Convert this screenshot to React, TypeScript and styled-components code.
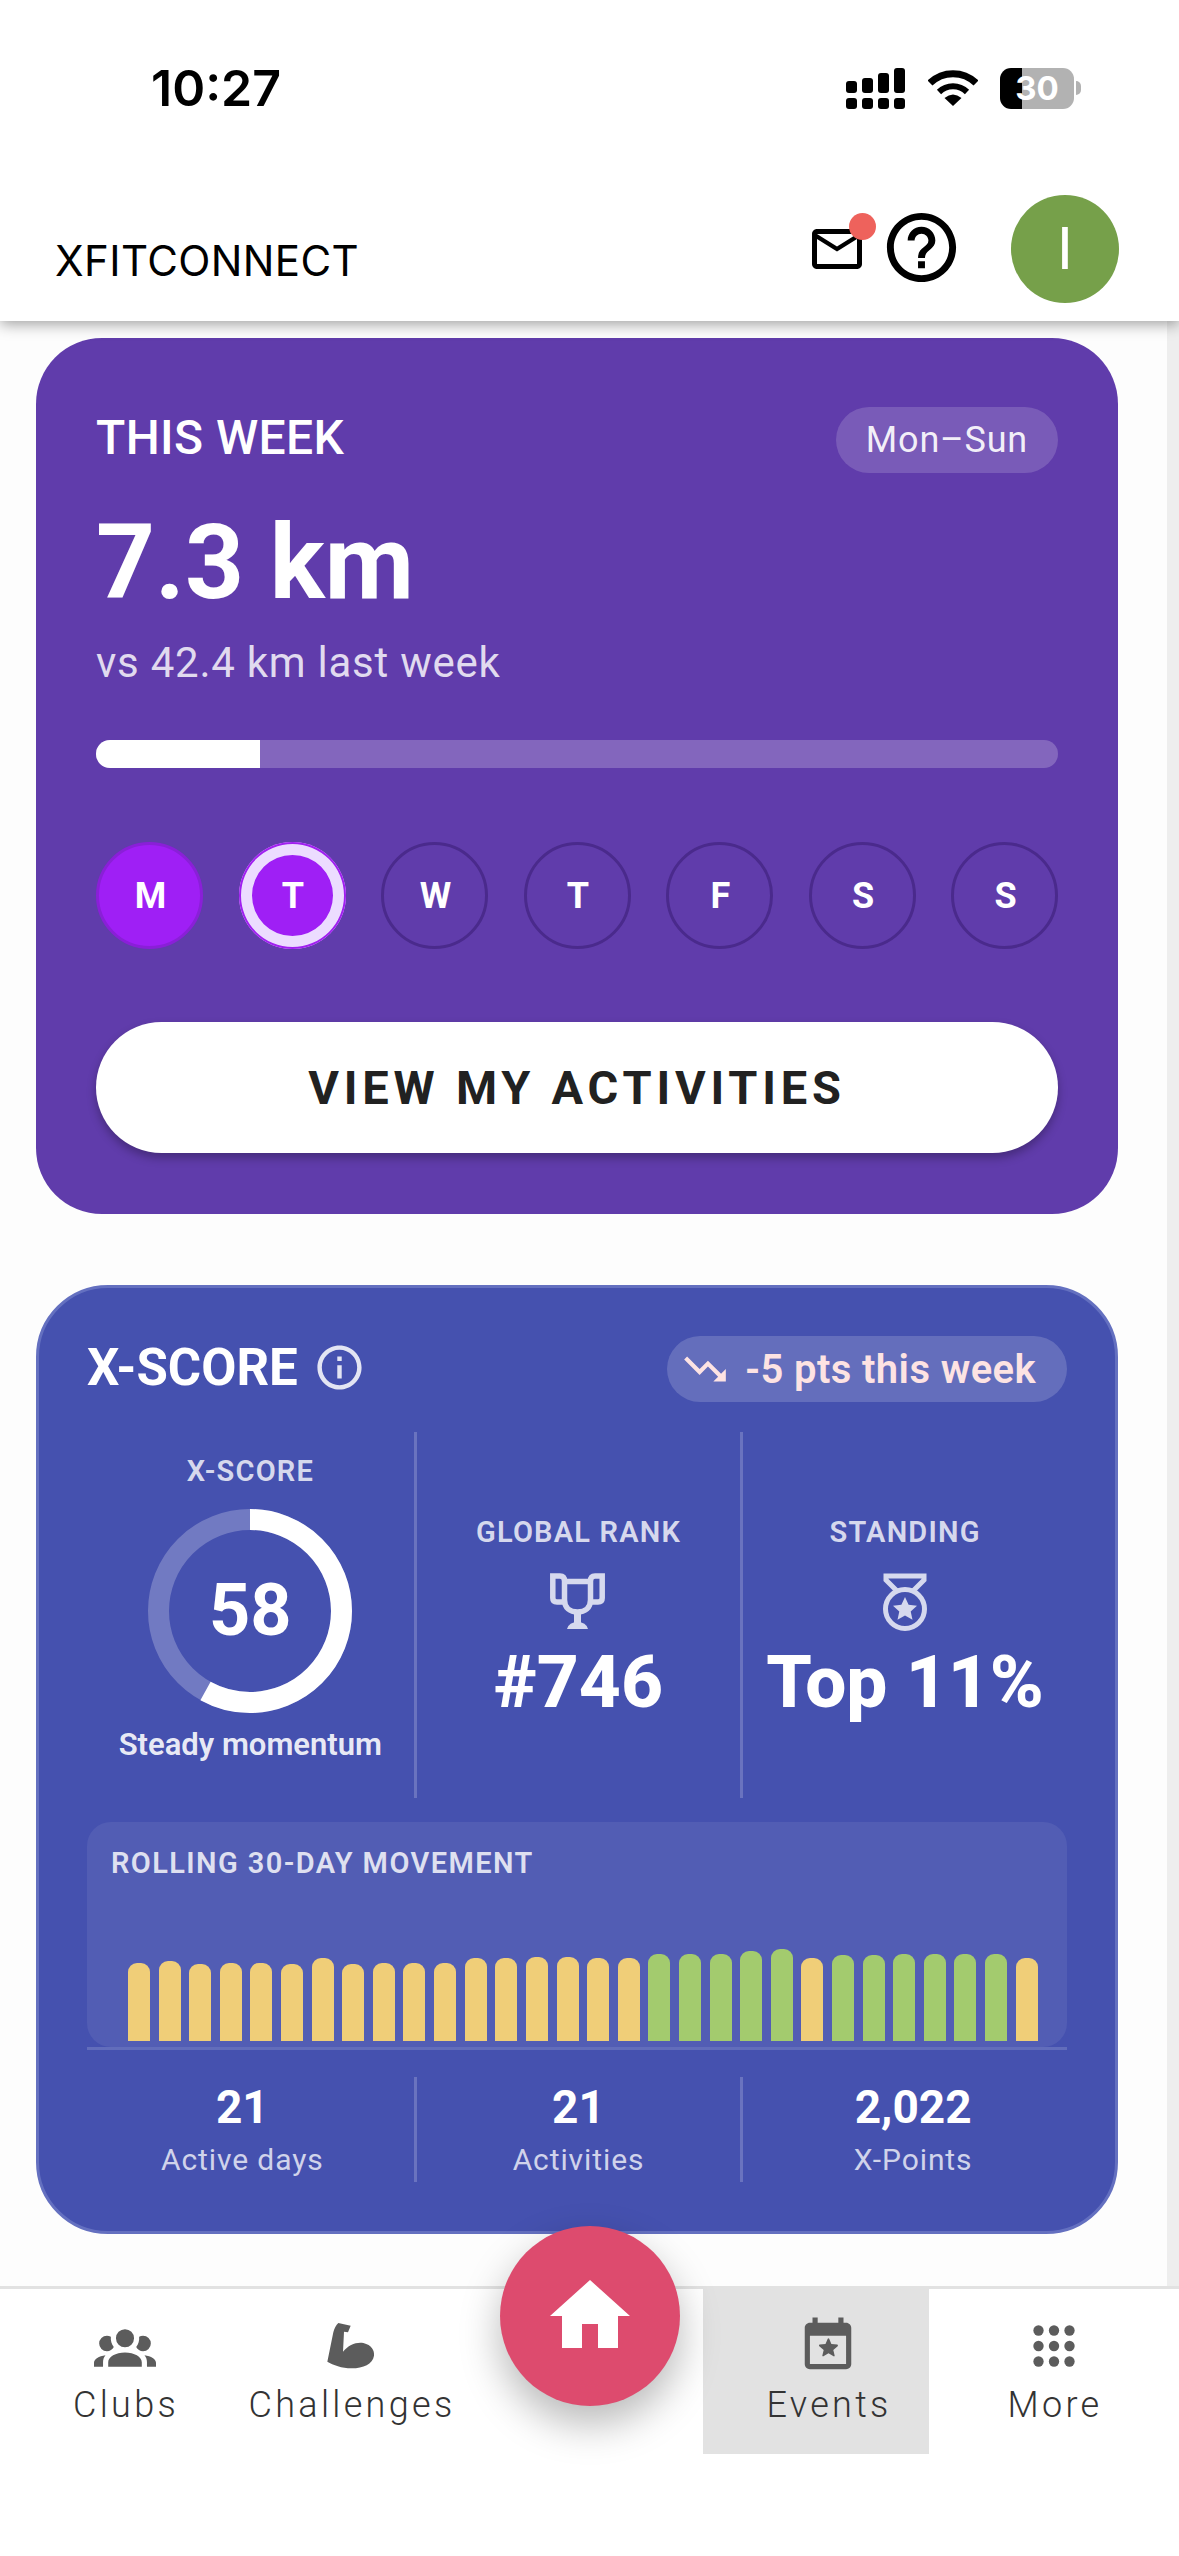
import React from 'react';
import styled, { createGlobalStyle } from 'styled-components';
import { MdHelpOutline, MdHome, MdInfoOutline, MdMailOutline, MdTrendingDown } from 'react-icons/md';

const GlobalStyle = createGlobalStyle`
    html, body {
        margin: 0;
        padding: 0;
        background: #ffffff;
    }
    * {
        box-sizing: border-box;
    }
`;

const Screen = styled.div`
    width: 1179px;
    height: 2556px;
    display: flex;
    flex-direction: column;
    overflow: hidden;
    background: #ffffff;
    font-family: Roboto, "Liberation Sans", sans-serif;
`;

const TopBar = styled.header`
    position: relative;
    z-index: 2;
    height: 321px;
    flex: none;
    background: #ffffff;
    box-shadow: 0 3px 14px rgba(0, 0, 0, 0.38);
`;

const StatusRow = styled.div`
    height: 176px;
    display: flex;
    align-items: center;
    justify-content: space-between;
    padding: 0 105px 0 151px;
`;

const Clock = styled.span`
    font-family: Inter, "Liberation Sans", sans-serif;
    font-size: 50px;
    font-weight: 600;
    color: #000000;
`;

const StatusIcons = styled.div`
    display: flex;
    align-items: center;
    gap: 22px;
`;

const Battery = styled.div`
    position: relative;
    width: 74px;
    height: 41px;
    border-radius: 11px;
    display: flex;
    align-items: center;
    justify-content: center;
    background: linear-gradient(90deg, #000000 0 30%, #b2b2b2 30% 100%);
    color: #ffffff;
    font-family: Inter, "Liberation Sans", sans-serif;
    font-size: 33px;
    font-weight: 700;

    &::after {
        content: '';
        position: absolute;
        right: -7px;
        top: 13px;
        width: 5px;
        height: 14px;
        border-radius: 0 5px 5px 0;
        background: #b2b2b2;
    }
`;

const HeaderRow = styled.div`
    height: 145px;
    display: flex;
    align-items: center;
    padding: 0 60px 0 55px;
`;

const Logo = styled.span`
    margin-top: 24px;
    font-family: Inter, "Liberation Sans", sans-serif;
    font-size: 42px;
    line-height: 42px;
    font-weight: 400;
    letter-spacing: 0.4px;
    color: #000000;
`;

const HeaderActions = styled.div`
    margin-left: auto;
    display: flex;
    align-items: center;
`;

const MailButton = styled.div`
    position: relative;
    width: 60px;
    height: 60px;
    color: #000000;
    margin-right: 13px;

    &::after {
        content: '';
        position: absolute;
        top: -6px;
        right: -9px;
        width: 27px;
        height: 27px;
        border-radius: 50%;
        background: #ee625c;
    }
`;

const HelpButton = styled.div`
    width: 83px;
    height: 83px;
    color: #000000;
    margin-top: -3px;
`;

const Avatar = styled.div`
    width: 108px;
    height: 108px;
    margin-left: 48px;
    border-radius: 50%;
    display: flex;
    align-items: center;
    justify-content: center;
    background: #76a04a;
    color: #ffffff;
    font-size: 60px;
`;

const Main = styled.main`
    flex: 1;
    min-height: 0;
    display: flex;
    flex-direction: column;
    gap: 71px;
    padding: 17px 49px 0 36px;
    background: #fdfdfd;
    border-right: 12px solid #eeeeee;
`;

const WeekCard = styled.section`
    height: 876px;
    flex: none;
    padding: 69px 60px 60px;
    border-radius: 66px;
    background: #603cab;
    color: #ffffff;
`;

const CardHead = styled.div`
    display: flex;
    align-items: flex-start;
    justify-content: space-between;
`;

const WeekTitle = styled.h2`
    margin: 1px 0 0;
    font-size: 48px;
    line-height: 60px;
    font-weight: 500;
    letter-spacing: 0.4px;
`;

const RangePill = styled.span`
    height: 66px;
    padding: 0 30px;
    display: flex;
    align-items: center;
    border-radius: 33px;
    background: rgba(255, 255, 255, 0.16);
    font-size: 36px;
    letter-spacing: 0.8px;
    color: rgba(255, 255, 255, 0.92);
`;

const Distance = styled.div`
    margin-top: 30px;
    font-size: 103px;
    line-height: 120px;
    font-weight: 700;
`;

const Compare = styled.div`
    margin-top: 10px;
    font-size: 42px;
    line-height: 60px;
    letter-spacing: 0.75px;
    color: rgba(255, 255, 255, 0.82);
`;

const Track = styled.div`
    margin-top: 47px;
    height: 28px;
    border-radius: 14px;
    overflow: hidden;
    background: rgba(255, 255, 255, 0.22);
`;

const TrackFill = styled.div`
    height: 100%;
    background: #ffffff;
`;

const Days = styled.div`
    margin-top: 74px;
    display: flex;
    justify-content: space-between;
`;

const Day = styled.div<{ $done?: boolean; $today?: boolean }>`
    width: 107px;
    height: 107px;
    padding-left: 2px;
    border-radius: 50%;
    display: flex;
    align-items: center;
    justify-content: center;
    font-size: 36px;
    font-weight: 700;
    color: #ffffff;
    background: ${(p) => (p.$done || p.$today ? '#9f1ff5' : 'transparent')};
    border: 3px solid ${(p) => (p.$done ? '#8a1fd8' : '#4a2a8c')};
    ${(p) => p.$today && `
        border: 0;
        box-shadow: inset 0 0 0 2px #a020f0, inset 0 0 0 13px #ecdcff;
    `}
`;

const ActivitiesButton = styled.button`
    display: block;
    width: 100%;
    height: 131px;
    margin-top: 73px;
    border: 0;
    border-radius: 66px;
    background: #ffffff;
    box-shadow: 0 5px 10px rgba(0, 0, 0, 0.28);
    font-family: inherit;
    font-size: 47px;
    font-weight: 700;
    letter-spacing: 4.8px;
    color: #212121;
`;

const ScoreCard = styled.section`
    height: 949px;
    flex: none;
    padding: 48px 48px 0;
    border: 3px solid #6470c0;
    border-radius: 72px;
    background: #4551af;
    color: #ffffff;
`;

const ScoreTitle = styled.h2`
    margin: 0;
    height: 66px;
    padding-bottom: 3px;
    display: flex;
    align-items: center;
    gap: 15px;
    font-size: 51px;
    font-weight: 700;

    svg {
        color: rgba(255, 255, 255, 0.85);
    }
`;

const TrendPill = styled.span`
    height: 66px;
    padding: 0 31px 0 13px;
    display: flex;
    align-items: center;
    gap: 15px;
    border-radius: 33px;
    background: rgba(255, 255, 255, 0.17);
    font-size: 40px;
    font-weight: 600;
    letter-spacing: 0.4px;
    color: #fde3e3;
`;

const MetricRow = styled.div`
    margin-top: 30px;
    height: 366px;
    display: grid;
    grid-template-columns: repeat(3, 1fr);
`;

const MetricCol = styled.div<{ $divided?: boolean; $score?: boolean }>`
    display: flex;
    flex-direction: column;
    align-items: center;
    justify-content: center;
    border-left: ${(p) => (p.$divided ? '3px solid rgba(255, 255, 255, 0.2)' : '0')};
    padding: ${(p) => (p.$score ? '1px 0 14px' : '6px 0 0')};
`;

const MetricLabel = styled.div`
    font-size: 29px;
    line-height: 40px;
    font-weight: 600;
    letter-spacing: 1.2px;
    color: rgba(255, 255, 255, 0.8);
`;

const Ring = styled.div`
    position: relative;
    width: 204px;
    height: 204px;
    margin-top: 18px;
`;

const RingValue = styled.div`
    position: absolute;
    inset: 0;
    display: flex;
    align-items: center;
    justify-content: center;
    font-size: 72px;
    font-weight: 700;
`;

const Momentum = styled.div`
    margin-top: 10px;
    font-size: 31px;
    line-height: 44px;
    font-weight: 600;
    white-space: nowrap;
    color: rgba(255, 255, 255, 0.9);
`;

const MetricIcon = styled.div`
    height: 57px;
    margin-top: 21px;
    color: #d6d9ee;
`;

const MetricValue = styled.div`
    margin-top: 10px;
    font-size: 73px;
    line-height: 84px;
    font-weight: 800;
    white-space: nowrap;
`;

const ChartPanel = styled.div`
    height: 225px;
    margin-top: 24px;
    padding: 21px 29px 6px 41px;
    display: flex;
    flex-direction: column;
    border-radius: 24px;
    background: rgba(255, 255, 255, 0.07);
`;

const ChartTitle = styled.div`
    margin-left: -17px;
    font-size: 29px;
    line-height: 40px;
    font-weight: 600;
    letter-spacing: 1.4px;
    color: rgba(255, 255, 255, 0.82);
`;

const Bars = styled.div`
    margin-top: auto;
    display: flex;
    align-items: flex-end;
    justify-content: space-between;
`;

const Bar = styled.div<{ $good?: boolean }>`
    width: 22px;
    border-radius: 9px 9px 0 0;
    background: ${(p) => (p.$good ? '#a3cb6e' : '#f0ce78')};
`;

const Baseline = styled.div`
    height: 3px;
    background: rgba(255, 255, 255, 0.16);
`;

const StatRow = styled.div`
    margin-top: 27px;
    height: 105px;
    display: grid;
    grid-template-columns: repeat(3, 1fr);
`;

const StatCol = styled.div<{ $divided?: boolean; $pad?: string }>`
    display: flex;
    flex-direction: column;
    align-items: center;
    justify-content: center;
    border-left: ${(p) => (p.$divided ? '3px solid rgba(255, 255, 255, 0.2)' : '0')};
    padding: ${(p) => p.$pad || '0'};
`;

const StatValue = styled.div`
    font-size: 46px;
    line-height: 56px;
    font-weight: 700;
`;

const StatLabel = styled.div`
    margin-top: 4px;
    font-size: 30px;
    line-height: 42px;
    letter-spacing: 0.9px;
    color: rgba(255, 255, 255, 0.76);
`;

const BottomNav = styled.nav`
    position: relative;
    flex: none;
    height: 270px;
    display: grid;
    grid-template-columns: 250px 202px 251px 226px 250px;
    align-items: start;
    border-top: 3px solid #e2e2e2;
    background: #ffffff;
`;

const NavItem = styled.div<{ $active?: boolean; $shift?: boolean }>`
    height: 165px;
    padding-top: 26px;
    padding-left: ${(p) => (p.$shift ? '24px' : '0')};
    display: flex;
    flex-direction: column;
    align-items: center;
    background: ${(p) => (p.$active ? '#e2e2e2' : 'transparent')};
    color: #5c5c5c;
`;

const NavLabel = styled.span`
    margin-top: 6px;
    padding-left: 2px;
    font-size: 36px;
    line-height: 44px;
    font-weight: 300;
    letter-spacing: 3.3px;
    color: #333333;
`;

const HomeFab = styled.button`
    position: absolute;
    left: 500px;
    top: -63px;
    z-index: 3;
    width: 180px;
    height: 180px;
    padding: 0;
    border: 0;
    border-radius: 50%;
    display: flex;
    align-items: center;
    justify-content: center;
    background: #dd4b6e;
    color: #ffffff;
    box-shadow: 0 18px 40px rgba(0, 0, 0, 0.28);
`;

const SignalIcon = () => (
    <svg width="60" height="41" viewBox="0 0 60 41" fill="#000">
        {[0, 16, 32, 48].map((x) => (
            <rect key={x} x={x} y="30" width="11" height="11" rx="3" />
        ))}
        <rect x="0" y="13" width="11" height="12" rx="3" />
        <rect x="16" y="10" width="11" height="15" rx="3" />
        <rect x="32" y="5" width="11" height="20" rx="3" />
        <rect x="48" y="0" width="11" height="25" rx="3" />
    </svg>
);

const WifiIcon = () => (
    <svg width="50" height="38" viewBox="0 0 50 38" fill="none" stroke="#000">
        <path d="M2 14 A33 33 0 0 1 48 14" strokeWidth="7" />
        <path d="M11 23 A20 20 0 0 1 39 23" strokeWidth="6" />
        <path d="M25 37 L16.5 29 Q25 22 33.5 29 Z" fill="#000" stroke="none" />
    </svg>
);

const TrophyIcon = () => (
    <svg width="56" height="57" viewBox="0 0 56 57" fill="none" stroke="currentColor" strokeWidth="5.5">
        <path d="M14.5 8.5 H40.5" />
        <path d="M14.5 8 V27 C14.5 35 20 39 27.5 39 C35 39 40.5 35 40.5 27 V8" />
        <path d="M14.5 8 Q14.5 3 10 3 H2.8 V25 Q2.8 29 7 29 H14.5" />
        <path d="M40.5 8 Q40.5 3 45 3 H52.2 V25 Q52.2 29 48 29 H40.5" />
        <path d="M24 39 H31 V50 H24 Z" fill="currentColor" stroke="none" />
        <path d="M17 56 Q19 49 27.5 49 Q36 49 38 56 Z" fill="currentColor" stroke="none" />
    </svg>
);

const MedalIcon = () => (
    <svg width="44" height="58" viewBox="0 0 44 58" fill="none" stroke="currentColor" strokeWidth="5">
        <path d="M15 19 L3 7 V3 H41 V7 L29 19" />
        <circle cx="22" cy="36" r="19.5" />
        <path
            d="M22 24 L25.6 31.8 L34 32.7 L27.7 38.4 L29.5 46.8 L22 42.5 L14.5 46.8 L16.3 38.4 L10 32.7 L18.4 31.8 Z"
            fill="currentColor"
            stroke="none"
        />
    </svg>
);

const ClubsIcon = () => (
    <svg width="62" height="62" viewBox="0 0 24 24" fill="currentColor">
        <path d="M12,5.5A3.5,3.5 0 0,1 15.5,9A3.5,3.5 0 0,1 12,12.5A3.5,3.5 0 0,1 8.5,9A3.5,3.5 0 0,1 12,5.5M5,8C5.56,8 6.08,8.15 6.53,8.42C6.38,9.85 6.8,11.27 7.66,12.38C7.16,13.34 6.16,14 5,14A3,3 0 0,1 2,11A3,3 0 0,1 5,8M19,8A3,3 0 0,1 22,11A3,3 0 0,1 19,14C17.84,14 16.84,13.34 16.34,12.38C17.2,11.27 17.62,9.85 17.47,8.42C17.92,8.15 18.44,8 19,8M5.5,18.25C5.5,16.18 8.41,14.5 12,14.5C15.59,14.5 18.5,16.18 18.5,18.25V20H5.5V18.25M0,20V18.5C0,17.11 1.89,15.94 4.45,15.6C3.86,16.28 3.5,17.22 3.5,18.25V20H0M24,20V18.5C24,17.11 22.11,15.94 19.55,15.6C20.14,16.28 20.5,17.22 20.5,18.25V20H24Z" />
    </svg>
);

const ArmIcon = () => (
    <svg width="62" height="62" viewBox="750 48 186 186" fill="currentColor">
        <path d="M805 72 L842 80 L834 100 L822 98 L819 158 C835 138 860 128 880 132 C905 138 914 155 912 170 C908 195 880 208 845 208 C815 208 790 198 772 188 L790 100 C793 88 798 78 805 72Z" />
    </svg>
);

const EventsIcon = () => (
    <svg width="62" height="62" viewBox="0 0 24 24" fill="currentColor">
        <path d="M6 1V3H5C3.89 3 3 3.89 3 5V19C3 20.1 3.89 21 5 21H19C20.1 21 21 20.1 21 19V5C21 3.89 20.1 3 19 3H18V1H16V3H8V1H6M5 8H19V19H5V8M12.19 9C12.06 9 11.94 9.08 11.89 9.19L11.03 11.27L8.8 11.46C8.5 11.5 8.4 11.86 8.63 12.05L10.33 13.5L9.81 15.69C9.75 15.93 10 16.13 10.22 16L12.19 14.83L14.16 16C14.38 16.13 14.63 15.93 14.57 15.69L14.05 13.5L15.75 12.05C15.94 11.86 15.85 11.5 15.55 11.46L13.31 11.27L12.45 9.19C12.4 9.08 12.28 9 12.19 9Z" />
    </svg>
);

const MoreIcon = () => (
    <svg width="62" height="62" viewBox="0 0 24 24" fill="currentColor">
        {[6, 12, 18].flatMap((cy) =>
            [6, 12, 18].map((cx) => <circle key={`${cx}-${cy}`} cx={cx} cy={cy} r="2" />)
        )}
    </svg>
);

const days = [
    { label: 'M', done: true },
    { label: 'T', today: true },
    { label: 'W' },
    { label: 'T' },
    { label: 'F' },
    { label: 'S' },
    { label: 'S' },
];

// top edge of each bar in the chart, measured from the baseline
const yellow = (height: number) => ({ height, good: false });
const green = (height: number) => ({ height, good: true });
const movement = [
    yellow(78), yellow(80), yellow(77), yellow(78), yellow(78), yellow(77), yellow(83), yellow(77),
    yellow(78), yellow(78), yellow(78), yellow(83), yellow(83), yellow(84), yellow(84), yellow(83),
    yellow(83), green(87), green(87), green(87), green(90), green(92), yellow(83), green(86),
    green(86), green(87), green(87), green(87), green(87), yellow(83),
];

const RING_RADIUS = 91.5;
const RING_LENGTH = 2 * Math.PI * RING_RADIUS;

export default function App() {
    const score = 58;
    const weekProgress = 17;

    return (
        <Screen>
            <GlobalStyle />
            <TopBar>
                <StatusRow>
                    <Clock>10:27</Clock>
                    <StatusIcons>
                        <SignalIcon />
                        <WifiIcon />
                        <Battery>30</Battery>
                    </StatusIcons>
                </StatusRow>
                <HeaderRow>
                    <Logo>XFITCONNECT</Logo>
                    <HeaderActions>
                        <MailButton>
                            <MdMailOutline size={60} />
                        </MailButton>
                        <HelpButton>
                            <MdHelpOutline size={83} />
                        </HelpButton>
                        <Avatar>I</Avatar>
                    </HeaderActions>
                </HeaderRow>
            </TopBar>

            <Main>
                <WeekCard>
                    <CardHead>
                        <WeekTitle>THIS WEEK</WeekTitle>
                        <RangePill>Mon–Sun</RangePill>
                    </CardHead>
                    <Distance>7.3 km</Distance>
                    <Compare>vs 42.4 km last week</Compare>
                    <Track>
                        <TrackFill style={{ width: `${weekProgress}%` }} />
                    </Track>
                    <Days>
                        {days.map((day, index) => (
                            <Day key={index} $done={day.done} $today={day.today}>
                                {day.label}
                            </Day>
                        ))}
                    </Days>
                    <ActivitiesButton>VIEW MY ACTIVITIES</ActivitiesButton>
                </WeekCard>

                <ScoreCard>
                    <CardHead>
                        <ScoreTitle>
                            X-SCORE
                            <MdInfoOutline size={53} />
                        </ScoreTitle>
                        <TrendPill>
                            <MdTrendingDown size={50} />
                            -5 pts this week
                        </TrendPill>
                    </CardHead>

                    <MetricRow>
                        <MetricCol $score>
                            <MetricLabel>X-SCORE</MetricLabel>
                            <Ring>
                                <svg width="204" height="204" viewBox="0 0 204 204" fill="none" strokeWidth="21">
                                    <circle cx="102" cy="102" r={RING_RADIUS} stroke="rgba(255,255,255,0.24)" />
                                    <circle
                                        cx="102"
                                        cy="102"
                                        r={RING_RADIUS}
                                        stroke="#ffffff"
                                        strokeDasharray={`${(RING_LENGTH * score) / 100} ${RING_LENGTH}`}
                                        transform="rotate(-90 102 102)"
                                    />
                                </svg>
                                <RingValue>{score}</RingValue>
                            </Ring>
                            <Momentum>Steady momentum</Momentum>
                        </MetricCol>
                        <MetricCol $divided>
                            <MetricLabel>GLOBAL RANK</MetricLabel>
                            <MetricIcon>
                                <TrophyIcon />
                            </MetricIcon>
                            <MetricValue>#746</MetricValue>
                        </MetricCol>
                        <MetricCol $divided>
                            <MetricLabel>STANDING</MetricLabel>
                            <MetricIcon>
                                <MedalIcon />
                            </MetricIcon>
                            <MetricValue>Top 11%</MetricValue>
                        </MetricCol>
                    </MetricRow>

                    <ChartPanel>
                        <ChartTitle>ROLLING 30-DAY MOVEMENT</ChartTitle>
                        <Bars>
                            {movement.map((bar, index) => (
                                <Bar key={index} $good={bar.good} style={{ height: bar.height }} />
                            ))}
                        </Bars>
                    </ChartPanel>
                    <Baseline />

                    <StatRow>
                        <StatCol $pad="0 16px 0 0">
                            <StatValue>21</StatValue>
                            <StatLabel>Active days</StatLabel>
                        </StatCol>
                        <StatCol $divided>
                            <StatValue>21</StatValue>
                            <StatLabel>Activities</StatLabel>
                        </StatCol>
                        <StatCol $divided $pad="0 0 0 16px">
                            <StatValue>2,022</StatValue>
                            <StatLabel>X-Points</StatLabel>
                        </StatCol>
                    </StatRow>
                </ScoreCard>
            </Main>

            <BottomNav>
                <NavItem>
                    <ClubsIcon />
                    <NavLabel>Clubs</NavLabel>
                </NavItem>
                <NavItem>
                    <ArmIcon />
                    <NavLabel>Challenges</NavLabel>
                </NavItem>
                <div />
                <NavItem $active $shift>
                    <EventsIcon />
                    <NavLabel>Events</NavLabel>
                </NavItem>
                <NavItem>
                    <MoreIcon />
                    <NavLabel>More</NavLabel>
                </NavItem>
                <HomeFab aria-label="Home">
                    <MdHome size={96} />
                </HomeFab>
            </BottomNav>
        </Screen>
    );
}
